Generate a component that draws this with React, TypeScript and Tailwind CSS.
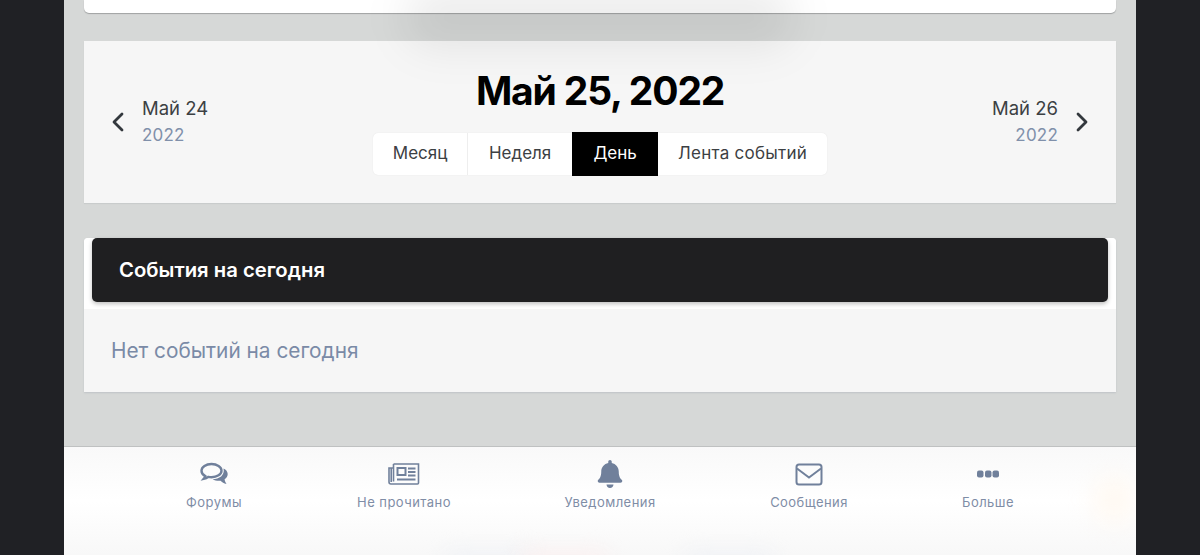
import { FaBell } from "react-icons/fa";

const tabs = ["Месяц", "Неделя", "День", "Лента событий"];

const Tabs = () => {
  return (
    <div className="flex h-[42px] rounded-[5px] bg-white text-[17px] text-[#3c4043] shadow-[0_0_1px_#dddddd]">
      <div className="flex w-[95px] items-center justify-center border-r border-[#eeeeee]">{tabs[0]}</div>
      <div className="flex w-[104px] items-center justify-center">{tabs[1]}</div>
      <div className="-my-px flex w-[86px] items-center justify-center bg-black text-white">{tabs[2]}</div>
      <div className="flex w-[169px] items-center justify-center tracking-[0.25px]">{tabs[3]}</div>
    </div>
  );
};

const Chevron = ({ dir }: { dir: "left" | "right" }) => {
  return (
    <svg width="14" height="22" viewBox="0 0 14 22" fill="none" stroke="#33383d" strokeWidth="2.8" strokeLinecap="round" strokeLinejoin="round">
      <path d={dir === "left" ? "M11 3 L3 11 L11 19" : "M3 3 L11 11 L3 19"} />
    </svg>
  );
};

const DateNav = () => {
  return (
    <div className="flex h-[162px] w-full justify-between bg-[#f6f6f6] shadow-[0_1px_1px_#c9cccc]">
      <div className="flex items-center pb-[1px] pl-[27px]">
        <Chevron dir="left" />
        <div className="ml-[17px] flex flex-col">
          <span className="text-[18.5px] leading-[26px] text-[#3c4043]">Май 24</span>
          <span className="text-[17px] leading-[28px] tracking-[0.2px] text-[#8090aa]">2022</span>
        </div>
      </div>
      <div className="flex flex-col items-center pt-[24px]">
        <h1 className="text-[39px] font-bold leading-[52px] tracking-[-1.15px] text-black">Май 25, 2022</h1>
        <div className="mt-[16px]">
          <Tabs />
        </div>
      </div>
      <div className="flex items-center pb-[1px] pr-[27px]">
        <div className="mr-[17px] flex flex-col items-end">
          <span className="text-[18.5px] leading-[26px] text-[#3c4043]">Май 26</span>
          <span className="text-[17px] leading-[28px] tracking-[0.2px] text-[#8090aa]">2022</span>
        </div>
        <Chevron dir="right" />
      </div>
    </div>
  );
};

const TodayEvents = () => {
  return (
    <div className="mt-[35px] w-full rounded-t-[4px] bg-[#f6f6f6] shadow-[0_1px_2px_#bfc3c6]">
      <div className="rounded-t-[4px] bg-white px-[8px] pb-[7px]">
        <div className="flex h-[64px] items-center rounded-[5px] bg-[#1f1f21] pl-[27px] text-[20.3px] font-semibold text-white shadow-[0_2px_4px_rgba(0,0,0,0.25)]">
          События на сегодня
        </div>
      </div>
      <div className="flex h-[83px] items-center pl-[27px] text-[20.8px] text-[#7a8aa6]">Нет событий на сегодня</div>
    </div>
  );
};

const CommentsIcon = () => {
  return (
    <svg width="28" height="24" viewBox="0 0 28 24">
      <path d="M11.5 2C6 2 1.5 4.8 1.5 8.7c0 2.3 1.5 4.2 3.8 5.4-.3 1.1-.9 2-1.6 2.8 1.8-.3 3.400-1 4.600-2 1.100.2 2.100.3 3.200.3 5.500 0 10-2.800 10-6.500S17 2 11.500 2Z" fill="none" stroke="#70809b" strokeWidth="2.4" />
      <path d="M23.500 6.500c2.600 1.200 4.200 3.200 4.200 5.600 0 2.100-1.200 4-3.100 5.200.2 1.700.9 3.300 1.900 4.700-2.500-.6-4.600-1.800-6-3.300-2.800.3-5.700-.2-7.900-1.500 6.600 0 12.500-3.900 10.900-10.700Z" fill="#70809b" />
    </svg>
  );
};

const NewsIcon = () => {
  return (
    <svg width="32" height="22" viewBox="0 0 32 22" fill="none" stroke="#70809b" strokeWidth="1.6">
      <path d="M5.500 1h25v19a1 1 0 0 1-1 1H3a2 2 0 0 1-2-2V5h4.500" />
      <path d="M5.500 1v17.500M3.200 5v14" />
      <rect x="9.500" y="5" width="8" height="7" strokeWidth="2" />
      <path d="M20 5.500h7.500M20 9h7.500M20 12.500h7.500M9 16.500h18.500" strokeWidth="1.800" />
    </svg>
  );
};

const MailIcon = () => {
  return (
    <svg width="28" height="23" viewBox="0 0 28 23" fill="none" stroke="#70809b" strokeWidth="2">
      <rect x="1.500" y="1.500" width="25" height="20" rx="2.500" />
      <path d="M2 5.500 L14 14.500 L26 5.500" />
    </svg>
  );
};

const DotsIcon = () => {
  return (
    <svg width="22" height="8" viewBox="0 0 22 8" fill="#70809b">
      <rect x="0" y="0.500" width="6.500" height="7" rx="2" />
      <rect x="8" y="0.500" width="6.500" height="7" rx="2" />
      <rect x="15.500" y="0.500" width="6.500" height="7" rx="2" />
    </svg>
  );
};

const NavItem = ({ icon, label, className }: { icon: React.ReactNode; label: string; className: string }) => {
  return (
    <div className={`flex flex-col items-center ${className}`}>
      <div className="flex h-[30px] items-center">{icon}</div>
      <span className="mt-[4px] text-[13px] leading-[18px] tracking-[0.45px] text-[#7f8da6]">{label}</span>
    </div>
  );
};

const BottomBar = () => {
  return (
    <div className="relative h-[109px] overflow-hidden border-t border-[#bfc1c1] bg-gradient-to-b from-[#f9f9f9] via-white to-[#f8f8f8]">
      <div className="absolute left-[1030px] top-[28px] h-[50px] w-[40px] rounded-full bg-[#fff9f2] blur-[12px]" />
      <div className="absolute bottom-[-16px] left-[380px] h-[20px] w-[90px] rounded-full bg-[#f0f2f6] blur-[10px]" />
      <div className="absolute bottom-[-16px] left-[455px] h-[20px] w-[90px] rounded-full bg-[#fbf0f0] blur-[10px]" />
      <div className="absolute bottom-[-16px] left-[620px] h-[20px] w-[90px] rounded-full bg-[#f0f2f6] blur-[10px]" />
      <div className="relative flex pt-[12px]">
        <NavItem className="ml-[121px] w-[58px]" label="Форумы" icon={<CommentsIcon />} />
        <NavItem className="ml-[107px] w-[108px]" label="Не прочитано" icon={<NewsIcon />} />
        <NavItem className="ml-[99px] w-[106px]" label="Уведомления" icon={<FaBell className="h-[28px] w-[26px] text-[#70809b]" />} />
        <NavItem className="ml-[101px] w-[90px]" label="Сообщения" icon={<MailIcon />} />
        <NavItem className="ml-[102px] w-[64px]" label="Больше" icon={<DotsIcon />} />
      </div>
    </div>
  );
};

export default function App() {
  return (
    <div className="flex h-[555px] w-[1200px] overflow-hidden bg-[#202125] font-['Inter',sans-serif]">
      <div className="relative ml-[64px] flex h-full w-[1072px] flex-col bg-[#d6d8d7]">
        <div className="flex-1 px-[20px]">
          <div className="h-[13px] rounded-b-[5px] bg-white shadow-[0_1px_1px_#a0a2a2]" />
          <div className="mt-[28px]">
            <DateNav />
          </div>
          <TodayEvents />
        </div>
        <BottomBar />
        <div className="pointer-events-none absolute left-[340px] top-[-14px] h-[62px] w-[390px] rounded-full bg-black/[0.07] blur-[20px]" />
      </div>
    </div>
  );
}
